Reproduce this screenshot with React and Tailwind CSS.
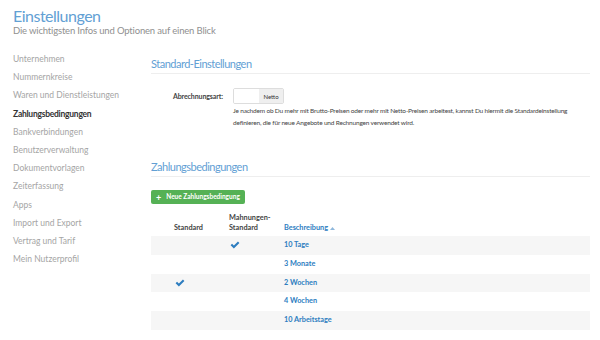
import React from "react";

const nav = [
  "Unternehmen",
  "Nummernkreise",
  "Waren und Dienstleistungen",
  "Zahlungsbedingungen",
  "Bankverbindungen",
  "Benutzerverwaltung",
  "Dokumentvorlagen",
  "Zeiterfassung",
  "Apps",
  "Import und Export",
  "Vertrag und Tarif",
  "Mein Nutzerprofil",
];

const rows = [
  { std: false, mahn: true, name: "10 Tage" },
  { std: false, mahn: false, name: "3 Monate" },
  { std: true, mahn: false, name: "2 Wochen" },
  { std: false, mahn: false, name: "4 Wochen" },
  { std: false, mahn: false, name: "10 Arbeitstage" },
];

function Check() {
  return (
    <svg width="10" height="8" viewBox="0 0 12 10">
      <path d="M0.5 5.2 L2.3 3.4 L4.6 5.7 L9.7 0.6 L11.5 2.4 L4.6 9.3 Z" fill="#2d7dbf" />
    </svg>
  );
}

export default function App() {
  return (
    <div
      className="w-[600px] h-[340px] bg-white overflow-hidden"
      style={{ fontFamily: "Lato, 'Open Sans', sans-serif" }}
    >
      <div className="pl-[13px] pt-[7px]">
        <div className="text-[16px] leading-[18px] tracking-[-0.5px] text-[#62a0d4]">Einstellungen</div>
        <div className="text-[9.5px] leading-[12px] tracking-[-0.17px] text-[#909090]">
          Die wichtigsten Infos und Optionen auf einen Blick
        </div>
      </div>
      <div className="flex mt-[13px]">
        <div className="w-[151px] pl-[13px] flex flex-col">
          {nav.map((n) => (
            <div
              key={n}
              className={
                "h-[18.2px] leading-[18.2px] text-[8.5px] " +
                (n === "Zahlungsbedingungen"
                  ? "font-bold text-[#333] tracking-[-0.25px]"
                  : "text-[#a5a5a5]")
              }
            >
              {n}
            </div>
          ))}
        </div>
        <div className="w-[439px] flex flex-col">
          <div className="text-[11px] leading-[16px] tracking-[-0.5px] text-[#62a0d4] mt-[6px]">
            Standard-Einstellungen
          </div>
          <div className="border-b border-[#eeeeee] mt-[1px]" />
          <div className="flex mt-[14px]">
            <div className="w-[72px] h-[16px] flex items-center justify-end text-[7px] tracking-[-0.1px] font-bold text-[#444]">
              Abrechnungsart:
            </div>
            <div className="ml-[10px] flex flex-col">
              <div className="flex w-[51px] h-[16px] border border-[#dddddd] rounded-[2px] overflow-hidden">
                <div className="w-[25px] bg-white" />
                <div className="flex-1 bg-[#efefef] text-[6px] text-[#333] flex items-center justify-center">
                  Netto
                </div>
              </div>
              <div className="text-[6.5px] leading-[12px] tracking-[-0.18px] text-[#444] mt-[1px] whitespace-nowrap">
                Je nachdem ob Du mehr mit Brutto-Preisen oder mehr mit Netto-Preisen arbeitest, kannst Du hiermit die Standardeinstellung
                <br />
                definieren, die für neue Angebote und Rechnungen verwendet wird.
              </div>
            </div>
          </div>
          <div className="text-[11px] leading-[16px] tracking-[-0.5px] text-[#62a0d4] mt-[30px]">
            Zahlungsbedingungen
          </div>
          <div className="border-b border-[#eeeeee] mt-[1px]" />
          <div className="flex mt-[13px]">
            <div className="flex items-center gap-[5px] bg-[#55b155] rounded-[2px] h-[14px] px-[5px] text-white text-[6.5px] font-bold">
              <span className="text-[9px] leading-none">+</span>
              Neue Zahlungsbedingung
            </div>
          </div>
          <div className="flex items-end mt-[9px] text-[7.3px] font-bold leading-[10px] pb-[3px]">
            <div className="w-[78px] pl-[23px] text-[#444]">Standard</div>
            <div className="w-[55px] text-[#444]">
              Mahnungen-
              <br />
              Standard
            </div>
            <div className="text-[#2d7dbf] flex items-center gap-[2px]">
              Beschreibung
              <svg width="5" height="3" viewBox="0 0 5 3" className="mt-[1px]">
                <path d="M0 3 L2.5 0 L5 3 Z" fill="#8fb8dc" />
              </svg>
            </div>
          </div>
          {rows.map((r, i) => (
            <div
              key={r.name}
              className={
                "flex items-center h-[18.8px] text-[7.3px] font-bold " +
                (i % 2 === 0 ? "bg-[#f6f6f6]" : "bg-white")
              }
            >
              <div className="w-[78px] pl-[24px] flex">{r.std && <Check />}</div>
              <div className="w-[55px] pl-[1px] flex">{r.mahn && <Check />}</div>
              <div className="text-[#2d7dbf]">{r.name}</div>
            </div>
          ))}
        </div>
      </div>
    </div>
  );
}
